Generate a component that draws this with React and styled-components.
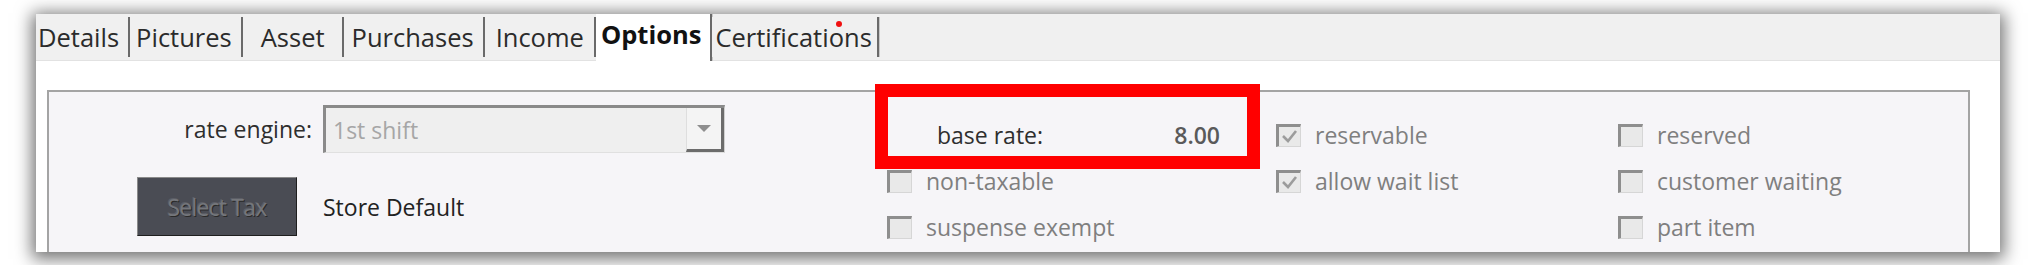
import React from 'react';
import styled, { createGlobalStyle } from 'styled-components';

const GlobalStyle = createGlobalStyle`
  html, body {
    margin: 0;
    padding: 0;
    background: #ffffff;
    font-family: 'Open Sans', 'Noto Sans', sans-serif;
  }
`;

const tabs = [
  { label: 'Details', pl: 2, pr: 9 },
  { label: 'Pictures', pl: 6, pr: 9 },
  { label: 'Asset', pl: 18, pr: 17 },
  { label: 'Purchases', pl: 8, pr: 9 },
  { label: 'Income', pl: 11, pr: 10 },
  { label: 'Options', pl: 5, pr: 9, active: true },
  { label: 'Certifications', pl: 3, pr: 5, dot: true },
];

const App = () => {
  return (
    <Page>
      <GlobalStyle />
      <Window>
        <TabStrip>
          {tabs.map((t) => (
            <Tab key={t.label} $active={t.active} $pl={t.pl} $pr={t.pr}>
              {t.label}
              {t.dot && <Dot />}
            </Tab>
          ))}
        </TabStrip>
        <Content>
          <GroupBox>
            <LeftCol>
              <FieldLabel>rate engine:</FieldLabel>
              <Combo>
                <ComboText>1st shift</ComboText>
                <ComboButton>
                  <Arrow />
                </ComboButton>
              </Combo>
              <TaxButton>Select Tax</TaxButton>
              <PlainText>Store Default</PlainText>
            </LeftCol>

            <CheckCol $width={389}>
              <BaseRate>
                <FieldLabel>base rate:</FieldLabel>
                <RateValue>8.00</RateValue>
                <Highlight />
              </BaseRate>
              <Check label='non-taxable' />
              <Check label='suspense exempt' />
            </CheckCol>

            <CheckCol $width={342}>
              <Check label='reservable' checked />
              <Check label='allow wait list' checked />
            </CheckCol>

            <CheckCol>
              <Check label='reserved' />
              <Check label='customer waiting' />
              <Check label='part item' />
            </CheckCol>
          </GroupBox>
        </Content>
      </Window>
    </Page>
  );
};

const Check = ({ label, checked }) => (
  <CheckRow>
    <Box>
      {checked && (
        <svg width='17' height='15' viewBox='0 0 17 15'>
          <path
            d='M2 7 L7 12 L15 2'
            fill='none'
            stroke='#9c9c9c'
            strokeWidth='2.6'
          />
        </svg>
      )}
    </Box>
    <CheckLabel>{label}</CheckLabel>
  </CheckRow>
);

export default App;

const Page = styled.div`
  width: 2032px;
  height: 265px;
  padding: 14px 32px 0 36px;
  box-sizing: border-box;
  overflow: hidden;
  background: #ffffff;
`;

const Window = styled.div`
  width: 1964px;
  height: 238px;
  background: #ffffff;
  box-shadow: 0 3px 16px 4px rgba(0, 0, 0, 0.55);
  display: flex;
  flex-direction: column;
  overflow: hidden;
`;

const TabStrip = styled.div`
  height: 47px;
  flex: none;
  background: #f0f0f0;
  border-bottom: 1px solid #e2e2e2;
  display: flex;
  align-items: flex-end;
  box-sizing: border-box;
`;

const Tab = styled.div`
  position: relative;
  height: ${({ $active }) => ($active ? '47px' : '40px')};
  margin-bottom: ${({ $active }) => ($active ? '-1px' : '3px')};
  padding: 0 ${({ $pr }) => $pr}px 0 ${({ $pl }) => $pl}px;
  display: flex;
  align-items: center;
  font-size: 25.5px;
  font-weight: ${({ $active }) => ($active ? 700 : 400)};
  color: ${({ $active }) => ($active ? '#111' : '#2b2b2b')};
  background: ${({ $active }) => ($active ? '#ffffff' : '#f0f0f0')};
  border-right: 2px solid #6a6a6a;
  box-shadow: 1px 0 0 #c8c8c8;
  padding-bottom: ${({ $active }) => ($active ? '8px' : '0')};
  box-sizing: border-box;
`;

const Dot = styled.span`
  position: absolute;
  right: 35px;
  top: 4px;
  width: 6px;
  height: 6px;
  border-radius: 50%;
  background: #f01010;
`;

const Content = styled.div`
  flex: 1;
  padding: 29px 30px 0 11px;
  background: #ffffff;
`;

const GroupBox = styled.div`
  height: 200px;
  background: #f6f5f8;
  border: 2px solid #a4a4a4;
  border-bottom: none;
  display: flex;
`;

const LeftCol = styled.div`
  width: 838px;
  flex: none;
  padding-top: 13px;
  display: grid;
  grid-template-columns: 263px 402px;
  grid-template-rows: 48px 59px;
  column-gap: 11px;
  row-gap: 24px;
  align-content: start;
`;

const FieldLabel = styled.span`
  font-size: 23px;
  color: #2e2e2e;
  justify-self: end;
  align-self: center;
`;

const PlainText = styled.span`
  font-size: 23px;
  color: #222;
  align-self: center;
`;

const Combo = styled.div`
  display: flex;
  background: #efefef;
  border-top: 3px solid #8a8a8a;
  border-left: 3px solid #8a8a8a;
  border-right: 1px solid #d0d0d0;
  border-bottom: 1px solid #e0e0e0;
  box-sizing: border-box;
`;

const ComboText = styled.span`
  flex: 1;
  padding-left: 7px;
  font-size: 23px;
  color: #a6a6a6;
  display: flex;
  align-items: center;
`;

const ComboButton = styled.div`
  width: 34px;
  display: flex;
  align-items: center;
  justify-content: center;
  background: #f4f4f4;
  border-left: 1px solid #dedede;
  border-right: 3px solid #6c6c6c;
  border-bottom: 3px solid #6c6c6c;
`;

const Arrow = styled.span`
  width: 0;
  height: 0;
  border-left: 7px solid transparent;
  border-right: 7px solid transparent;
  border-top: 7px solid #8e8e8e;
`;

const TaxButton = styled.div`
  justify-self: end;
  margin-right: 15px;
  width: 160px;
  height: 59px;
  box-sizing: border-box;
  display: flex;
  align-items: center;
  justify-content: center;
  background: #4a4c54;
  border: 1px solid #1e1e1e;
  border-top-color: #8a8a8a;
  border-left-color: #8a8a8a;
  font-size: 23px;
  color: #74767b;
  text-shadow: -1px -1px 0 #5c5e66, 1px 1px 0 #2a2a2a;
  letter-spacing: -0.8px;
`;

const CheckCol = styled.div`
  ${({ $width }) => ($width ? `width: ${$width}px; flex: none;` : 'flex: 1;')}
  padding-top: 20px;
  display: flex;
  flex-direction: column;
`;

const CheckRow = styled.div`
  height: 46px;
  display: flex;
  align-items: center;
  gap: 14px;
`;

const Box = styled.span`
  width: 25px;
  height: 23px;
  box-sizing: border-box;
  background: #e9e9e9;
  border-top: 3px solid #8e8e8e;
  border-left: 3px solid #8e8e8e;
  border-right: 1px solid #d6d6d6;
  border-bottom: 1px solid #d6d6d6;
  display: flex;
  align-items: center;
  justify-content: center;
`;

const CheckLabel = styled.span`
  font-size: 23px;
  color: #7f7f7f;
`;

const BaseRate = styled.div`
  position: relative;
  height: 46px;
  width: 333px;
  padding-left: 50px;
  box-sizing: border-box;
  display: flex;
  align-items: center;
  justify-content: space-between;
`;

const RateValue = styled.span`
  font-size: 23px;
  font-weight: 600;
  color: #5a5a5a;
`;

const Highlight = styled.span`
  position: absolute;
  left: -12px;
  top: -28px;
  width: 385px;
  height: 85px;
  box-sizing: border-box;
  border: 13px solid #ff0000;
`;
